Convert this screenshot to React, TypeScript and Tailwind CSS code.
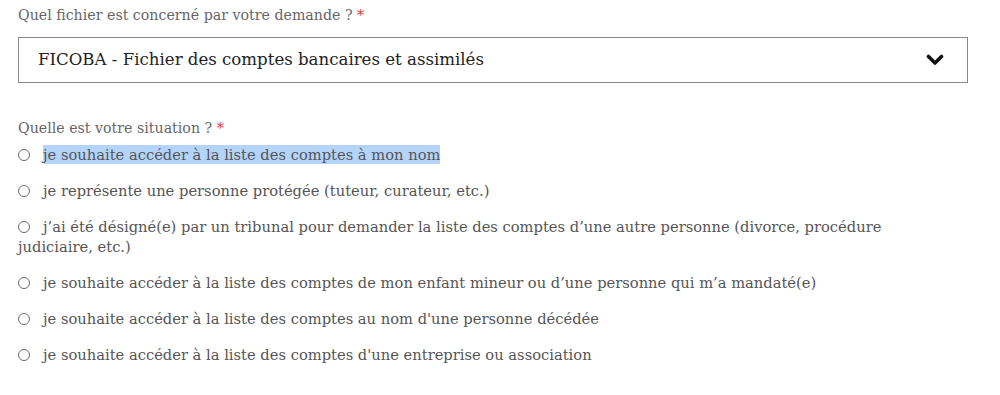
import React from 'react';

const options = [
    'je représente une personne protégée (tuteur, curateur, etc.)',
    'j’ai été désigné(e) par un tribunal pour demander la liste des comptes d’une autre personne (divorce, procédure judiciaire, etc.)',
    'je souhaite accéder à la liste des comptes de mon enfant mineur ou d’une personne qui m’a mandaté(e)',
    "je souhaite accéder à la liste des comptes au nom d'une personne décédée",
    "je souhaite accéder à la liste des comptes d'une entreprise ou association",
];

function Radio() {
    return <span className="inline-block w-[12px] h-[12px] rounded-full border border-[#6b6b6b] mr-[13px] align-[-1px]" />;
}

export default function App() {
    return (
        <div className="w-[1000px] h-[395px] bg-white pl-[18px] pr-[32px] pt-[5px] font-['DejaVu_Serif',serif]">
            <div className="text-[14.2px] leading-[20px] text-[#666]">
                Quel fichier est concerné par votre demande ? <span className="text-[#d33]">*</span>
            </div>

            {/* Select */}
            <div className="mt-[12px] h-[46px] border border-[#8a8a8a] flex items-center justify-between pl-[19px] pr-[23px]">
                <span className="text-[16.6px] text-[#222]">FICOBA - Fichier des comptes bancaires et assimilés</span>
                <svg width="18" height="12" viewBox="0 0 18 12" className="text-[#111]">
                    <polyline points="2.5,2.5 9,9 15.5,2.5" fill="none" stroke="currentColor" strokeWidth="3.6" strokeLinecap="round" strokeLinejoin="round" />
                </svg>
            </div>

            <div className="mt-[35px] text-[14.2px] leading-[20px] text-[#666]">
                Quelle est votre situation ? <span className="text-[#d33]">*</span>
            </div>

            <div className="mr-[24px] text-[14.7px] leading-[20px] text-[#555]">
                <div className="mt-[7px]">
                    <Radio />
                    <span className="bg-[#b4d4fb] py-[1px]">je souhaite accéder à la liste des comptes à mon nom</span>
                </div>
                {options.map((o) => (
                    <div key={o} className="mt-[16px]">
                        <Radio />
                        {o}
                    </div>
                ))}
            </div>
        </div>
    );
}
